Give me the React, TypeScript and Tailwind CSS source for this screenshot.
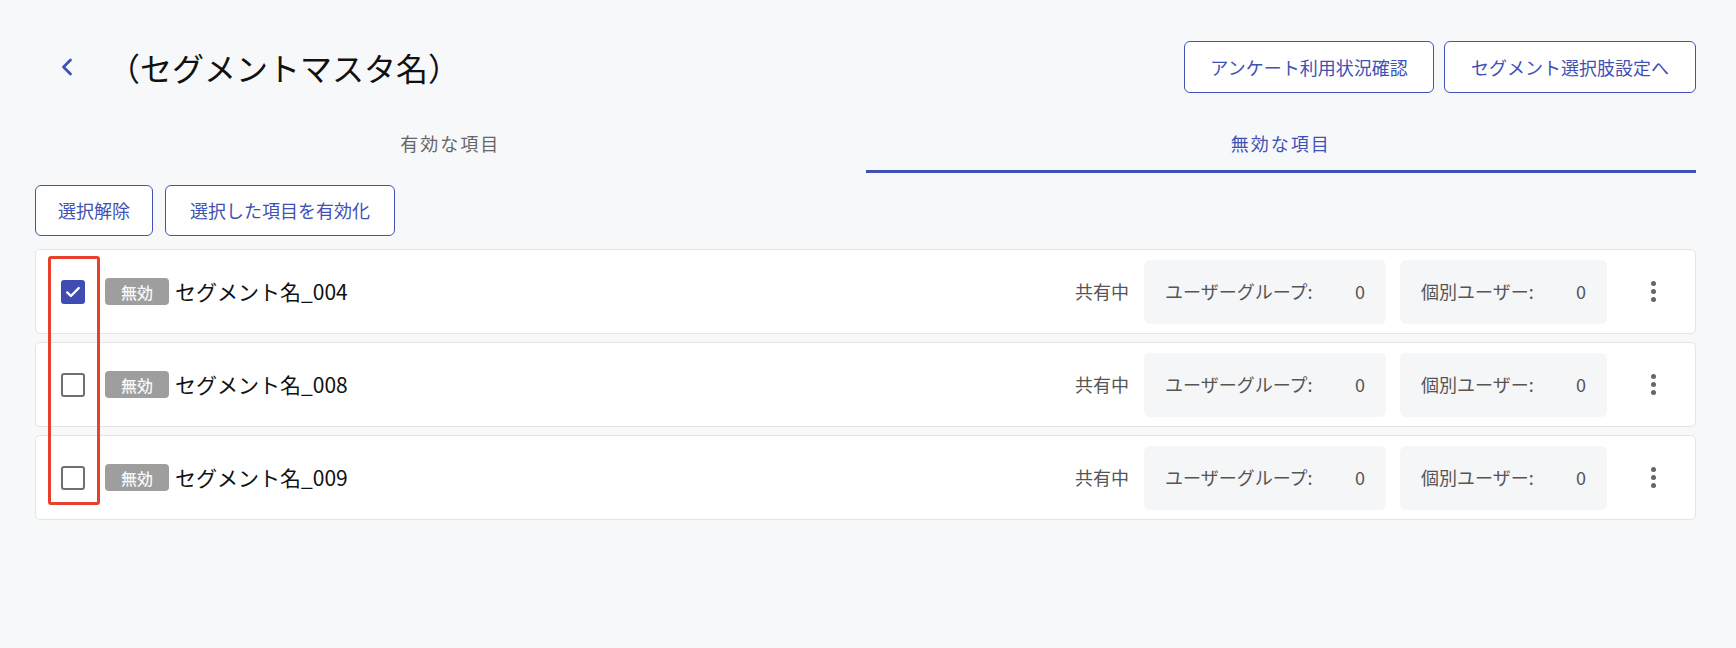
import { ChevronLeft } from "lucide-react";

const rows = [
  { name: "セグメント名_004", checked: true },
  { name: "セグメント名_008", checked: false },
  { name: "セグメント名_009", checked: false },
];

function Checkbox({ checked }: { checked: boolean }) {
  if (checked) {
    return (
      <span className="w-[24px] h-[24px] rounded-[3px] bg-[#3f4db3] flex items-center justify-center shrink-0">
        <svg width="18" height="18" viewBox="0 0 18 18" fill="none">
          <path d="M3.2 9.4l3.7 3.6L14.8 5" stroke="white" strokeWidth="2.4" strokeLinecap="round" strokeLinejoin="round" />
        </svg>
      </span>
    );
  }
  return <span className="w-[24px] h-[24px] rounded-[3px] border-2 border-[#707070] bg-white shrink-0" />;
}

export default function App() {
  return (
    <div
      className="min-h-screen bg-[#f7f8fa] pl-[35px] pr-[40px] pt-[41px] text-[#111]"
      style={{ fontFamily: '"Noto Sans CJK JP", "Noto Sans", sans-serif' }}
    >
      {/* ヘッダー */}
      <div className="flex items-center justify-between h-[52px]">
        <div className="flex items-center">
          <button className="w-[64px] h-[52px] flex items-center justify-center text-[#3f51b5]">
            <ChevronLeft size={28} strokeWidth={2.4} />
          </button>
          <h1 className="ml-[9px] text-[32px] leading-none font-normal">（セグメントマスタ名）</h1>
        </div>
        <div className="flex gap-[10px]">
          <button className="h-[52px] w-[250px] rounded-[6px] border border-[#4252b8] bg-white text-[18px] text-[#3f51b5]">
            アンケート利用状況確認
          </button>
          <button className="h-[52px] w-[252px] rounded-[6px] border border-[#4252b8] bg-white text-[18px] text-[#3f51b5]">
            セグメント選択肢設定へ
          </button>
        </div>
      </div>

      {/* タブ */}
      <div className="mt-[20px] grid grid-cols-2 h-[60px]">
        <div className="flex items-center justify-center text-[18px] tracking-[2px] text-[#666]">有効な項目</div>
        <div className="relative flex items-center justify-center text-[18px] tracking-[2px] text-[#3f51b5]">
          無効な項目
          <span className="absolute left-0 right-0 bottom-0 h-[3px] bg-[#3f51b5]" />
        </div>
      </div>

      {/* 操作ボタン */}
      <div className="mt-[12px] flex gap-[12px]">
        <button className="h-[51px] w-[118px] rounded-[6px] border border-[#4252b8] bg-white text-[18px] text-[#3f51b5]">
          選択解除
        </button>
        <button className="h-[51px] w-[230px] rounded-[6px] border border-[#4252b8] bg-white text-[18px] text-[#3f51b5]">
          選択した項目を有効化
        </button>
      </div>

      {/* 一覧 */}
      <div className="relative mt-[13px] flex flex-col gap-[8px]">
        {rows.map((row) => (
          <div
            key={row.name}
            className="h-[85px] flex items-center bg-white border border-[#e3e5e8] rounded-[5px] pl-[25px] pr-[22px]"
          >
            <Checkbox checked={row.checked} />
            <span className="ml-[20px] w-[64px] h-[27px] rounded-[4px] bg-[#9e9e9e] text-[#f7f7f7] text-[16px] font-medium flex items-center justify-center">
              無効
            </span>
            <span className="ml-[6px] text-[21px]">{row.name}</span>
            <div className="flex-1" />
            <span className="text-[18px] text-[#555]">共有中</span>
            <div className="ml-[15px] w-[242px] h-[64px] rounded-[6px] bg-[#f5f6f8] flex items-center justify-between px-[21px] text-[18px] text-[#555]">
              <span>ユーザーグループ:</span>
              <span>0</span>
            </div>
            <div className="ml-[14px] w-[207px] h-[64px] rounded-[6px] bg-[#f5f6f8] flex items-center justify-between px-[21px] text-[18px] text-[#555]">
              <span>個別ユーザー:</span>
              <span>0</span>
            </div>
            <button className="ml-[26px] w-[40px] h-[40px] flex flex-col items-center justify-center gap-[3px]">
              <span className="w-[5px] h-[5px] rounded-full bg-[#666]" />
              <span className="w-[5px] h-[5px] rounded-full bg-[#666]" />
              <span className="w-[5px] h-[5px] rounded-full bg-[#666]" />
            </button>
          </div>
        ))}
        {/* 注記の赤枠 */}
        <div className="absolute left-[13px] top-[7px] w-[52px] h-[249px] border-[3px] border-[#e8402a] rounded-[3px] pointer-events-none" />
      </div>
    </div>
  );
}
